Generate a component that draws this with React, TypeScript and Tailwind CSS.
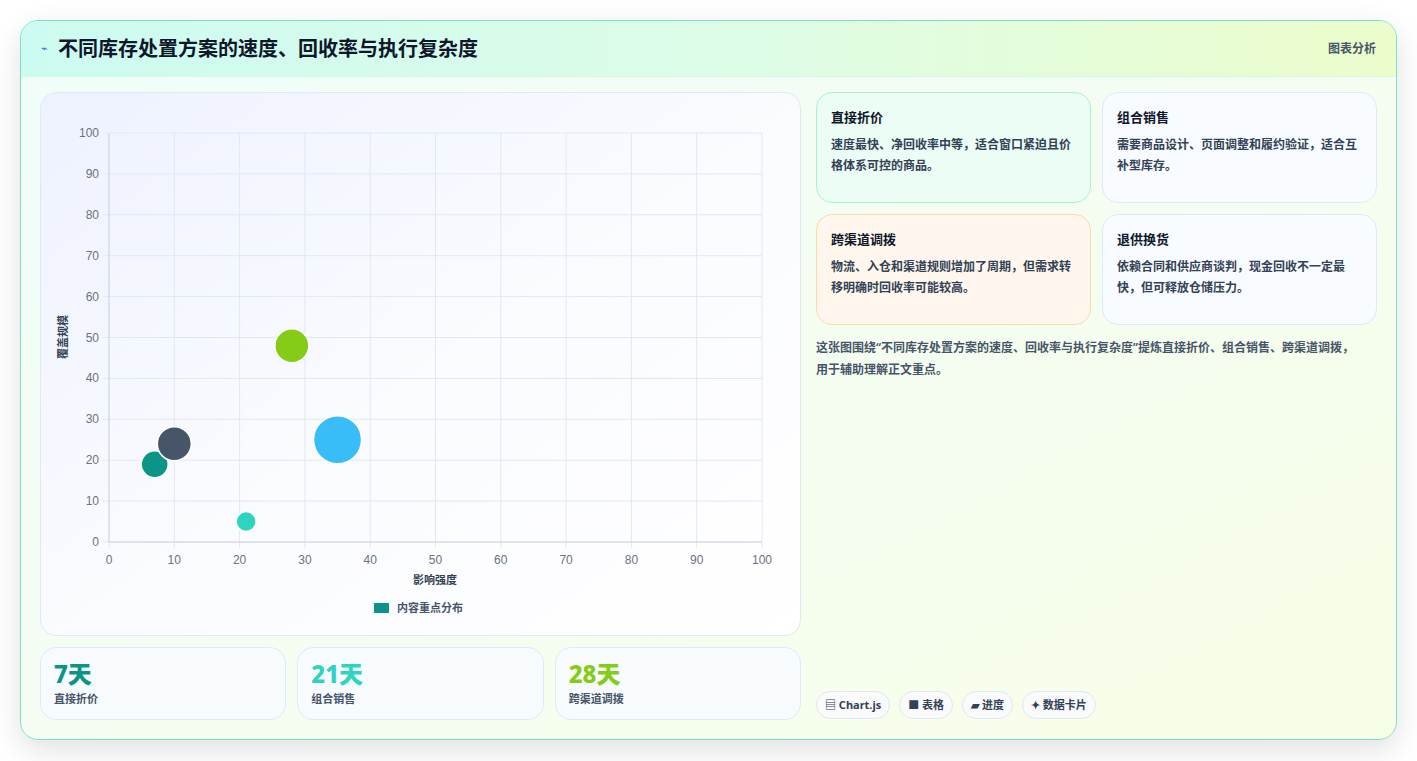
import React from "react";

const F = '"Noto Sans", "Noto Sans CJK SC", sans-serif';

function Chart() {
  const x0 = 68, x1 = 721, y0 = 449, y1 = 40;
  const X = (v: number) => x0 + ((x1 - x0) * v) / 100;
  const Y = (v: number) => y0 - ((y0 - y1) * v) / 100;
  const ticks = [0, 10, 20, 30, 40, 50, 60, 70, 80, 90, 100];
  const bubbles = [
    { x: 7, y: 19, r: 13.5, c: "#0d9488" },
    { x: 10, y: 24, r: 17, c: "#475569" },
    { x: 21, y: 5, r: 10, c: "#2dd4bf" },
    { x: 28, y: 48, r: 17, c: "#84cc16" },
    { x: 35, y: 25, r: 24, c: "#38bdf8" },
  ];
  return (
    <svg width="760" height="544" viewBox="0 0 760 544" className="block" style={{ fontFamily: '"Liberation Sans", "Noto Sans CJK SC", sans-serif' }}>
      {ticks.map((t) => (
        <g key={t}>
          <line x1={X(t)} x2={X(t)} y1={y1} y2={y0 + 6} stroke="#e2e8f0" />
          <line x1={x0 - 6} x2={x1} y1={Y(t)} y2={Y(t)} stroke="#e2e8f0" />
          <text x={X(t)} y={y0 + 22} textAnchor="middle" fontSize="12" fill="#6b7280">{t}</text>
          <text x={x0 - 10} y={Y(t) + 4} textAnchor="end" fontSize="12" fill="#6b7280">{t}</text>
        </g>
      ))}
      <line x1={x0} x2={x0} y1={y1} y2={y0} stroke="#cbd5e1" />
      <line x1={x0} x2={x1} y1={y0} y2={y0} stroke="#cbd5e1" />
      {bubbles.map((b, i) => (
        <circle key={i} cx={X(b.x)} cy={Y(b.y)} r={b.r} fill={b.c} stroke="#ffffff" strokeWidth="1.5" />
      ))}
      <text x="394" y="491" textAnchor="middle" fontSize="11" fontWeight="700" fill="#334155">影响强度</text>
      <text transform="translate(26 244) rotate(-90)" textAnchor="middle" fontSize="11" fontWeight="700" fill="#334155">覆盖规模</text>
      <rect x="333" y="510" width="15" height="10" fill="#0d9488" />
      <text x="356" y="519" fontSize="11" fontWeight="700" fill="#475569">内容重点分布</text>
    </svg>
  );
}

function Card({ title, text, cls }: { title: string; text: string; cls: string }) {
  return (
    <div className={`rounded-2xl border pl-[14px] pr-[12px] pt-[14px] h-[111px] ${cls}`}>
      <div className="text-[13px] font-bold text-[#0f172a] leading-5">{title}</div>
      <div className="mt-[7px] text-[12px] font-semibold text-[#334155] leading-[21px] w-[244px]">{text}</div>
    </div>
  );
}

function Stat({ v, l, c }: { v: string; l: string; c: string }) {
  return (
    <div className="flex-1 rounded-2xl border border-[#dbeafe] bg-[#f8fbff]/90 px-[13px] pt-[11px] h-[73px]">
      <div className={`text-[24px] font-extrabold leading-[30px] ${c}`}>{v}</div>
      <div className="text-[11px] font-semibold text-[#475569] mt-[2px]">{l}</div>
    </div>
  );
}

export default function App() {
  return (
    <div className="w-[1417px] h-[761px] bg-[#f3f4f6] overflow-hidden" style={{ fontFamily: F }}>
      <div className="w-[1417px] h-[761px] bg-white pt-[20px] px-[20px]">
        <div className="w-[1377px] h-[720px] rounded-[18px] border border-[#7ddfc9] overflow-hidden shadow-[0_10px_30px_rgba(0,0,0,0.12)] bg-gradient-to-br from-[#f0fdfa] via-[#f5fdf2] to-[#f7fee7] flex flex-col">
          <div className="h-[56px] shrink-0 flex items-center justify-between px-[20px] bg-gradient-to-r from-[#ccfbf1] via-[#dcfce7] to-[#ecfccb] border-b border-[#d1fae5]">
            <div className="flex items-center gap-[10px]">
              <span className="text-[11px] text-[#2563eb]">⌁</span>
              <span className="text-[20px] font-bold text-[#0f172a]">不同库存处置方案的速度、回收率与执行复杂度</span>
            </div>
            <span className="text-[12px] font-semibold text-[#475569]">图表分析</span>
          </div>
          <div className="flex gap-[15px] px-[19px] pt-[15px]">
            <div className="w-[761px] flex flex-col gap-[11px]">
              <div className="h-[544px] rounded-2xl border border-[#e2e8f0] bg-gradient-to-br from-[#eef2ff] via-[#fafbff] to-[#ffffff] overflow-hidden">
                <Chart />
              </div>
              <div className="flex gap-[11px] w-[761px]">
                <Stat v="7天" l="直接折价" c="text-[#0d9488]" />
                <Stat v="21天" l="组合销售" c="text-[#2dd4bf]" />
                <Stat v="28天" l="跨渠道调拨" c="text-[#84cc16]" />
              </div>
            </div>
            <div className="w-[562px] flex flex-col h-[628px]">
              <div className="grid grid-cols-2 gap-[11px]">
                <Card title="直接折价" text="速度最快、净回收率中等，适合窗口紧迫且价格体系可控的商品。" cls="border-[#a7f3d0] bg-[#ecfdf5]" />
                <Card title="组合销售" text="需要商品设计、页面调整和履约验证，适合互补型库存。" cls="border-[#dbeafe] bg-[#f8fbff]" />
                <Card title="跨渠道调拨" text="物流、入仓和渠道规则增加了周期，但需求转移明确时回收率可能较高。" cls="border-[#fcd9a8] bg-[#fff7ed]" />
                <Card title="退供换货" text="依赖合同和供应商谈判，现金回收不一定最快，但可释放仓储压力。" cls="border-[#dbeafe] bg-[#f8fbff]" />
              </div>
              <div className="mt-[12px] text-[12px] font-semibold text-[#475569] leading-[22px] pr-[12px]">
                这张图围绕“不同库存处置方案的速度、回收率与执行复杂度”提炼直接折价、组合销售、跨渠道调拨，用于辅助理解正文重点。
              </div>
              <div className="mt-auto flex gap-[9px] pb-[1px]">
                {["▤ Chart.js", "■ 表格", "▰ 进度", "✦ 数据卡片"].map((t) => (
                  <span key={t} className="h-[28px] px-[8px] flex items-center rounded-full border border-[#e2e8f0] bg-[#f8fafc] text-[11px] font-bold text-[#334155]">{t}</span>
                ))}
              </div>
            </div>
          </div>
        </div>
      </div>
    </div>
  );
}
